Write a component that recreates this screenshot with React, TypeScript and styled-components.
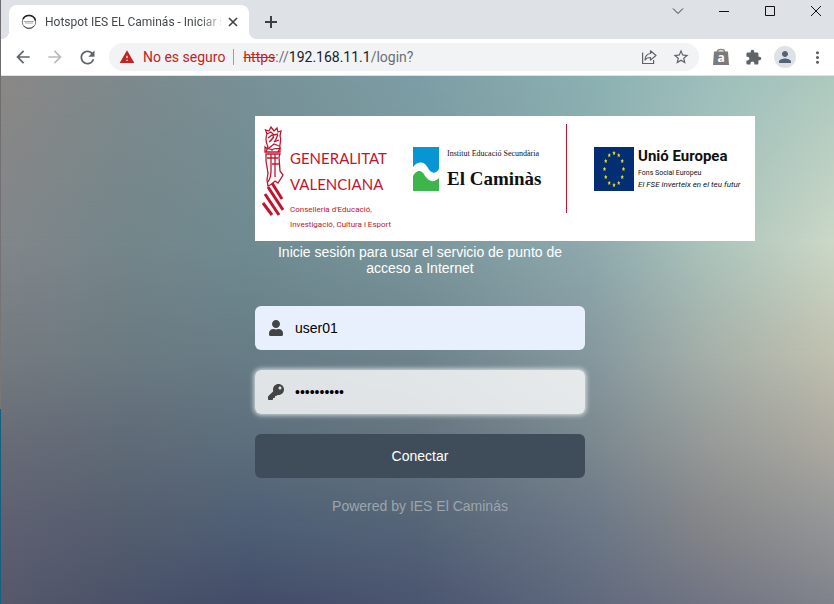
import React from 'react';
import styled, { createGlobalStyle } from 'styled-components';
import { FaKey, FaUser } from 'react-icons/fa';
import {
  MdArrowBack,
  MdArrowForward,
  MdExtension,
  MdMoreVert,
  MdPerson,
  MdRefresh,
  MdStarBorder,
  MdWarning,
} from 'react-icons/md';

const GlobalStyle = createGlobalStyle`
  *, *::before, *::after { box-sizing: border-box; }
  body { margin: 0; font-family: "Liberation Sans", Arial, sans-serif; }
  button, input { font: inherit; }
  svg { display: block; flex: none; }
`;

const Screen = styled.div`
  display: flex;
  min-height: 100vh;
`;

const DesktopEdge = styled.div`
  flex: none;
  width: 1px;
  background: linear-gradient(#6b6b70 0, #7b7776 409px, #16607f 409px);
`;

const BrowserWindow = styled.div`
  flex: 1;
  min-width: 0;
  display: flex;
  flex-direction: column;
  font-family: Roboto, 'Open Sans', sans-serif;
`;

const TabStrip = styled.header`
  display: flex;
  align-items: flex-start;
  height: 39px;
  padding-left: 8px;
  background: #dee1e6;
`;

const Tab = styled.div`
  position: relative;
  display: flex;
  align-items: center;
  flex: none;
  width: 240px;
  height: 34px;
  margin-top: 5px;
  padding: 0 8px 0 12px;
  border-radius: 8px 8px 0 0;
  background: #fff;
  &::before, &::after {
    content: '';
    position: absolute;
    bottom: 0;
    width: 8px;
    height: 8px;
  }
  &::before {
    right: 100%;
    background: radial-gradient(circle at 0 0, transparent 8px, #fff 8px);
  }
  &::after {
    left: 100%;
    background: radial-gradient(circle at 100% 0, transparent 8px, #fff 8px);
  }
`;

const TabTitle = styled.span`
  flex: 1;
  min-width: 0;
  margin: 0 4px 0 8px;
  white-space: nowrap;
  font-size: 12px;
  line-height: 16px;
  color: #45494d;
  mask-image: linear-gradient(to right, #000 88%, rgba(0, 0, 0, 0.2));
`;

const IconButton = styled.button<{ $size: number; $color?: string }>`
  display: flex;
  align-items: center;
  justify-content: center;
  flex: none;
  width: ${(p) => p.$size}px;
  height: ${(p) => p.$size}px;
  padding: 0;
  border: 0;
  border-radius: 50%;
  background: none;
  color: ${(p) => p.$color ?? '#5f6368'};
`;

const NewTab = styled(IconButton)`
  margin: 8px 0 0 8px;
`;

const WindowControls = styled.div`
  display: flex;
  margin-left: auto;
  margin-right: -5px;
`;

const WindowButton = styled.button`
  display: flex;
  align-items: center;
  justify-content: center;
  width: 46px;
  height: 22px;
  padding: 0;
  border: 0;
  background: none;
  color: #111;
`;

const Toolbar = styled.nav`
  display: flex;
  align-items: center;
  height: 37px;
  padding: 0 1px 0 6px;
  background: #fff;
  border-bottom: 1px solid #dfe3e3;
`;

const AddressBar = styled.div`
  display: flex;
  align-items: center;
  flex: 1;
  min-width: 0;
  height: 28px;
  margin: 0 6px;
  padding: 0 2px 0 10px;
  border-radius: 14px;
  background: #f1f3f4;
  font-size: 14px;
  line-height: 20px;
`;

const Warning = styled.span`
  margin-left: 8px;
  padding-right: 8px;
  border-right: 1px solid #9aa0a6;
  line-height: 16px;
  white-space: nowrap;
  color: #c5221f;
`;

const Address = styled.span`
  flex: 1;
  margin-left: 9px;
  white-space: nowrap;
  color: #6b6f74;
  s { color: #c5221f; }
  b { font-weight: 400; color: #202124; }
`;

const Avatar = styled(IconButton)`
  margin: 0 5px;
  background: #dee1e6;
`;

const Page = styled.main`
  position: relative;
  isolation: isolate;
  flex: 1;
  padding: 40px 0 40px 5px;
  font-family: 'Liberation Sans', Arial, sans-serif;
  font-size: 14px;
  line-height: 16px;
`;

const Backdrop = styled.div`
  position: absolute;
  inset: 0;
  z-index: -1;
  display: grid;
  grid-template-rows: 31fr 21fr 17fr 15fr 16fr;
`;

const Band = styled.div<{ $from: string; $to: string }>`
  display: grid;
  background: ${(p) => p.$to};
  &::before {
    content: '';
    background: ${(p) => p.$from};
    mask-image: linear-gradient(#000, transparent);
  }
`;

const sweep = (...colors: string[]) => {
  const stops = [0, 15, 30, 50, 71, 85, 100];
  return `linear-gradient(to right, ${colors.map((c, i) => `${c} ${stops[i]}%`).join(', ')})`;
};

const sweeps = [
  sweep('#8a8785', '#7d898c', '#779096', '#7c9da5', '#8bb0b1', '#9cbebb', '#adc8be'),
  sweep('#82868a', '#74868a', '#6f8b91', '#7a979c', '#8eaaae', '#abc4bb', '#cbd8c7'),
  sweep('#757b80', '#6c7b82', '#677d87', '#6e848d', '#86999f', '#a6b1aa', '#c1c2b0'),
  sweep('#686c76', '#606b78', '#5d6f7d', '#65747f', '#7b8990', '#979b99', '#aeaba1'),
  sweep('#5f6072', '#555f6f', '#4f6076', '#566678', '#6c7887', '#868789', '#959798'),
  sweep('#57586b', '#4a5269', '#434d69', '#4a5570', '#616a7e', '#727583', '#80838b'),
];

const LoginForm = styled.form`
  width: 330px;
  margin: 0 auto;
`;

const Banner = styled.div`
  display: grid;
  grid-template-columns: 151px 153px 28px auto;
  width: 500px;
  height: 125px;
  padding: 8px 0 0 7px;
  background: #fff;
  white-space: nowrap;
`;

const BrandGroup = styled.div<{ $top: number; $gap: number }>`
  display: flex;
  align-items: flex-start;
  gap: ${(p) => p.$gap}px;
  padding-top: ${(p) => p.$top}px;
`;

const BrandText = styled.div<{ $top?: number; $color?: string }>`
  padding-top: ${(p) => p.$top ?? 0}px;
  color: ${(p) => p.$color ?? '#111'};
`;

const BrandDepartment = styled.div`
  padding-top: 5px;
`;

const BrandLine = styled.div<{ $size: number; $height: number; $weight?: number; $family?: string; $italic?: boolean }>`
  font-family: ${(p) => p.$family ?? 'Roboto'}, sans-serif;
  font-size: ${(p) => p.$size}px;
  line-height: ${(p) => p.$height}px;
  font-weight: ${(p) => p.$weight ?? 400};
  font-style: ${(p) => (p.$italic ? 'italic' : 'normal')};
`;

const Divider = styled.div`
  width: 1px;
  height: 89px;
  background: #c3142d;
`;

const Intro = styled.p`
  margin: 3px 0 30px;
  padding: 0 20px;
  text-align: center;
  color: #fff;
`;

const Field = styled.label<{ $filled?: boolean; $focused?: boolean }>`
  display: flex;
  align-items: center;
  height: 44px;
  margin-bottom: 20px;
  padding: 0 13px;
  border-radius: 6px;
  color: #444;
  background: ${(p) => (p.$filled ? '#e8f0fe' : 'rgba(255, 255, 255, 0.8)')};
  box-shadow: ${(p) => (p.$focused ? '0 0 5px 1px rgba(255, 255, 255, 0.8)' : 'none')};
`;

const FieldIcon = styled.span`
  width: 27px;
`;

const FieldInput = styled.input`
  flex: 1;
  min-width: 0;
  padding: 0;
  border: 0;
  outline: 0;
  background: none;
  color: #000;
`;

const Submit = styled.button`
  display: block;
  width: 100%;
  height: 44px;
  border: 0;
  border-radius: 6px;
  background: #3e4d59;
  color: #fff;
`;

const Powered = styled.p`
  margin: 20px 0 0;
  text-align: center;
  color: #9ca5ae;
`;

const Favicon = () => (
  <svg width="16" height="16" viewBox="0 0 16 16" fill="none">
    <circle cx="8" cy="8" r="6.7" stroke="#777" strokeWidth="1" />
    <path d="M2 5.2A6.7 6.7 0 0 1 14.5 6.5" stroke="#222" strokeWidth="1.6" />
    <path d="M3 7.5h10M4 9h8" stroke="#aaa" strokeWidth="1" />
    <path d="M3 12a6.7 6.7 0 0 0 10 0" stroke="#555" strokeWidth="1" />
  </svg>
);

const ShareIcon = () => (
  <svg width="18" height="18" viewBox="0 0 18 18" fill="none" stroke="#5f6368" strokeWidth="1.2">
    <path d="M2.6 4.5v11h11V12" />
    <path d="M10.5 2.8 16 7.5l-5.5 4.6V9.5C8 9.5 6.200 10.300 5 12c.2-3.700 2.200-6.200 5.500-6.500Z" strokeLinejoin="round" />
  </svg>
);

const BagIcon = () => (
  <svg width="18" height="18" viewBox="0 0 18 18">
    <path d="M5.500 6V3.300Q5.500 1.500 9 1.500T12.500 3.300V6" fill="none" stroke="#858585" strokeWidth="1.5" />
    <path d="M2 3.500h14l1 13.500H1Z" fill="#7b7b7b" />
    <text x="9" y="14" textAnchor="middle" fontFamily="Open Sans" fontWeight="700" fontSize="12" fill="#fff">a</text>
  </svg>
);

const Crest = () => (
  <svg width="22" height="92" viewBox="0 0 22 92" fill="none" stroke="#c3142d" strokeWidth="1.3">
    <path d="M5 8 3.500 4 7 5 9 1l3 4 3-3 1 4 3-1-1 5c2 5-1 8 0 12l-2 4M5 8c-2 5-1 9 1 13l-2 5M5 8l4-2 3 3 4-1M6 12l4-3c3 1 0 5-3 7m9-7c-2 2-1 5-4 7l5-2m-10 8 5-4 5 2m-9-5 4-4" />
    <path d="M3 21c3 3 5 1 7 3 3-3 5 0 8-2v4H3Z" />
    <path d="M4 28h14l-1 3 1 14 3 4-5 8-3-2-3 3-4 2-1-6 1-7-2-12Z" />
    <path d="M5 32h11M9 28v17c0 5-1 8-3 11M13 28v23M10 38h8" />
    <path d="M10 57 20 73M6 61l15 23M3 68l14 21M1 77l9 12" strokeWidth="3" />
  </svg>
);

const CaminasMark = () => (
  <svg width="26" height="44" viewBox="0 0 26 44">
    <path d="M0 0h26v22c-3 5-8 5-11-1-4-7-10-7-15-1Z" fill="#0796d3" />
    <path d="M0 44V29c4-7 9-6 12 0 5 7 10 6 14 2v13Z" fill="#3cb54b" />
  </svg>
);

const starAngles = Array.from({ length: 12 }, (_, i) => (i * Math.PI) / 6);

const EuropeFlag = () => (
  <svg width="40" height="44" viewBox="0 0 40 44">
    <path d="M0 0h40v44H0Z" fill="#032e73" />
    {starAngles.map((a) => (
      <path
        key={a}
        transform={`translate(${20 + Math.sin(a) * 9.5} ${22 - Math.cos(a) * 16})`}
        d="M0-2.200.6-.7H1.600L.8.4 1.100 2.100 0 1.200-1.100 2.100-.8.4-1.600-.7H-.6Z"
        fill="#e6dc2a"
      />
    ))}
  </svg>
);

export default function App() {
  return (
    <Screen>
      <GlobalStyle />
      <DesktopEdge />
      <BrowserWindow>
        <TabStrip>
          <Tab>
            <Favicon />
            <TabTitle>Hotspot IES EL Caminás - Iniciar s</TabTitle>
            <IconButton $size={16} $color="#3c4043" aria-label="Cerrar pestaña">
              <svg width="10" height="10" viewBox="0 0 10 10" stroke="currentColor" strokeWidth="1.6">
                <path d="m1 1 8 8M9 1 1 9" />
              </svg>
            </IconButton>
          </Tab>
          <NewTab $size={28} $color="#3c4043" aria-label="Nueva pestaña">
            <svg width="12" height="12" viewBox="0 0 12 12" stroke="currentColor" strokeWidth="2">
              <path d="M6 0v12M0 6h12" />
            </svg>
          </NewTab>
          <WindowControls>
            <WindowButton aria-label="Buscar pestañas">
              <svg width="12" height="12" viewBox="0 0 12 12" fill="none" stroke="#333">
                <path d="m1 3.500 5 5 5-5" />
              </svg>
            </WindowButton>
            <WindowButton aria-label="Minimizar">
              <svg width="10" height="10" viewBox="0 0 10 10" fill="none" stroke="currentColor">
                <path d="M0 5.500h10" />
              </svg>
            </WindowButton>
            <WindowButton aria-label="Maximizar">
              <svg width="10" height="10" viewBox="0 0 10 10" fill="none" stroke="currentColor">
                <path d="M.5.5h9v9h-9Z" />
              </svg>
            </WindowButton>
            <WindowButton aria-label="Cerrar">
              <svg width="10" height="10" viewBox="0 0 10 10" fill="none" stroke="currentColor">
                <path d="m0 0 10 10M10 0 0 10" />
              </svg>
            </WindowButton>
          </WindowControls>
        </TabStrip>
        <Toolbar>
          <IconButton $size={32} aria-label="Atrás"><MdArrowBack size={20} /></IconButton>
          <IconButton $size={32} $color="#b9bbbe" aria-label="Adelante"><MdArrowForward size={20} /></IconButton>
          <IconButton $size={32} aria-label="Recargar"><MdRefresh size={21} /></IconButton>
          <AddressBar>
            <MdWarning size={16} color="#c5221f" />
            <Warning>No es seguro</Warning>
            <Address><s>https</s>://<b>192.168.11.1</b>/login?</Address>
            <IconButton $size={32} aria-label="Compartir"><ShareIcon /></IconButton>
            <IconButton $size={32} aria-label="Añadir a marcadores"><MdStarBorder size={18} /></IconButton>
          </AddressBar>
          <IconButton $size={32} aria-label="Tienda"><BagIcon /></IconButton>
          <IconButton $size={32} aria-label="Extensiones"><MdExtension size={17} /></IconButton>
          <Avatar $size={22} $color="#566275" aria-label="Perfil"><MdPerson size={18} /></Avatar>
          <IconButton $size={32} aria-label="Menú"><MdMoreVert size={19} /></IconButton>
        </Toolbar>
        <Page>
          <Backdrop aria-hidden>
            {sweeps.slice(1).map((to, i) => (
              <Band key={to} $from={sweeps[i]} $to={to} />
            ))}
          </Backdrop>
          <LoginForm onSubmit={(e) => e.preventDefault()}>
            <Banner>
              <BrandGroup $top={2} $gap={6}>
                <Crest />
                <BrandText $top={19} $color="#c3142d">
                  <BrandLine $size={15} $height={26} $family="Lato">GENERALITAT</BrandLine>
                  <BrandLine $size={15} $height={26} $family="Lato">VALENCIANA</BrandLine>
                  <BrandDepartment>
                    <BrandLine $size={8} $height={15}>Conselleria d'Educació,</BrandLine>
                    <BrandLine $size={8} $height={15}>Investigació, Cultura i Esport</BrandLine>
                  </BrandDepartment>
                </BrandText>
              </BrandGroup>
              <BrandGroup $top={23} $gap={8}>
                <CaminasMark />
                <BrandText>
                  <BrandLine $size={8} $height={14} $family="Liberation Serif">Institut Educació Secundària</BrandLine>
                  <BrandLine $size={19} $height={36} $weight={700} $family="Liberation Serif">El Caminàs</BrandLine>
                </BrandText>
              </BrandGroup>
              <Divider />
              <BrandGroup $top={23} $gap={4}>
                <EuropeFlag />
                <BrandText>
                  <BrandLine $size={15} $height={18} $weight={700}>Unió Europea</BrandLine>
                  <BrandLine $size={7} $height={16}>Fons Social Europeu</BrandLine>
                  <BrandLine $size={8} $height={8} $italic>El FSE inverteix en el teu futur</BrandLine>
                </BrandText>
              </BrandGroup>
            </Banner>
            <Intro>Inicie sesión para usar el servicio de punto de acceso a Internet</Intro>
            <Field $filled>
              <FieldIcon><FaUser size={16} /></FieldIcon>
              <FieldInput aria-label="Usuario" defaultValue="user01" />
            </Field>
            <Field $focused>
              <FieldIcon><FaKey size={16} /></FieldIcon>
              <FieldInput aria-label="Contraseña" type="password" defaultValue="contrasena" />
            </Field>
            <Submit type="submit">Conectar</Submit>
            <Powered>Powered by IES El Caminás</Powered>
          </LoginForm>
        </Page>
      </BrowserWindow>
    </Screen>
  );
}
